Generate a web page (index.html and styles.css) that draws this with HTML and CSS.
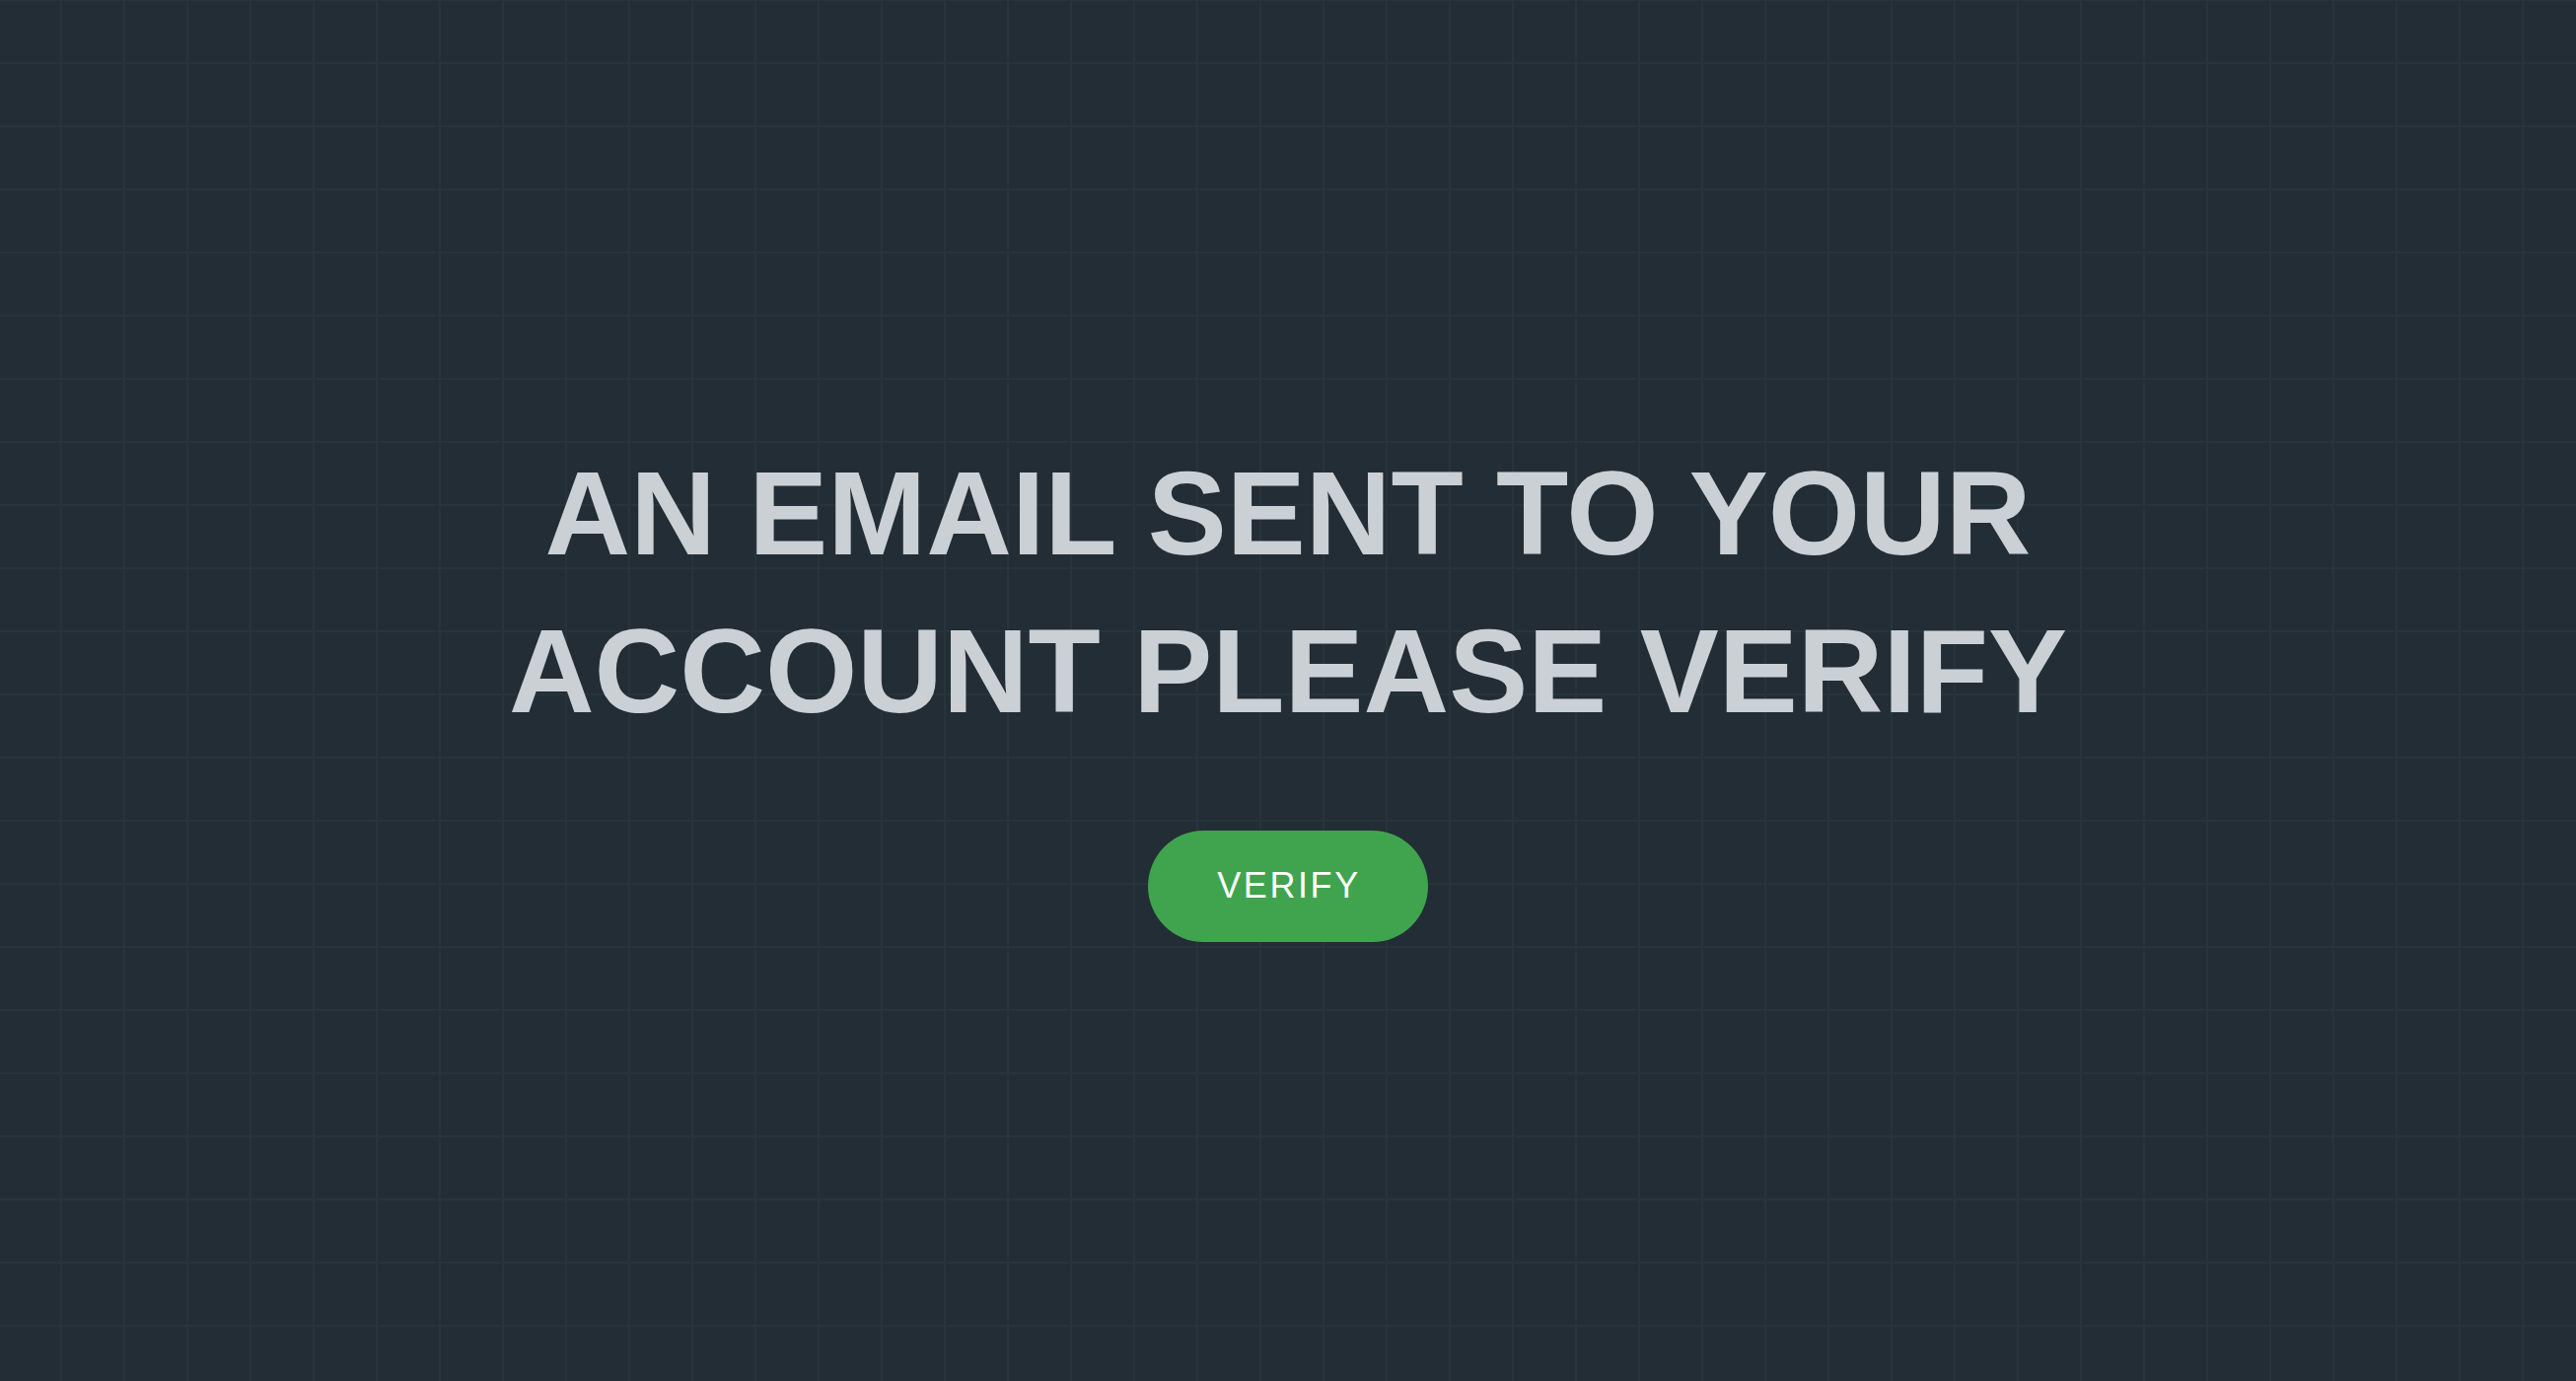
FILE: index.html
```html
<!DOCTYPE html>
<html lang="en">
<head>
<meta charset="utf-8">
<title>Verify your account</title>
<link rel="stylesheet" href="styles.css">
</head>
<body>
<main class="page">
  <h1 class="title">AN EMAIL SENT TO YOUR ACCOUNT PLEASE VERIFY</h1>
  <button class="verify-btn" type="button">VERIFY</button>
</main>
</body>
</html>
```
FILE: styles.css
```css
html, body {
  margin: 0;
  padding: 0;
  height: 100%;
}
body {
  background-color: #222d35;
  background-image:
    linear-gradient(to right, #28343c 2px, transparent 2px),
    linear-gradient(to bottom, #28343c 2px, transparent 2px);
  background-size: 64px 64px;
  background-position: -3px -1px;
  font-family: "Liberation Sans", Arial, sans-serif;
}
.page {
  box-sizing: border-box;
  height: 100vh;
  padding-bottom: 6px;
  display: flex;
  flex-direction: column;
  align-items: center;
  justify-content: center;
  gap: 82px;
}
.title {
  margin: 0;
  max-width: 1700px;
  font-size: 120px;
  line-height: 160px;
  font-weight: 700;
  color: #cbd0d5;
  text-align: center;
}
.verify-btn {
  border: none;
  background: #3fa44d;
  color: #ffffff;
  font-family: "Liberation Sans", Arial, sans-serif;
  font-size: 36px;
  line-height: 41px;
  letter-spacing: 2.6px;
  padding: 35px 68px 37px 70px;
  border-radius: 57px;
  cursor: pointer;
}
```
